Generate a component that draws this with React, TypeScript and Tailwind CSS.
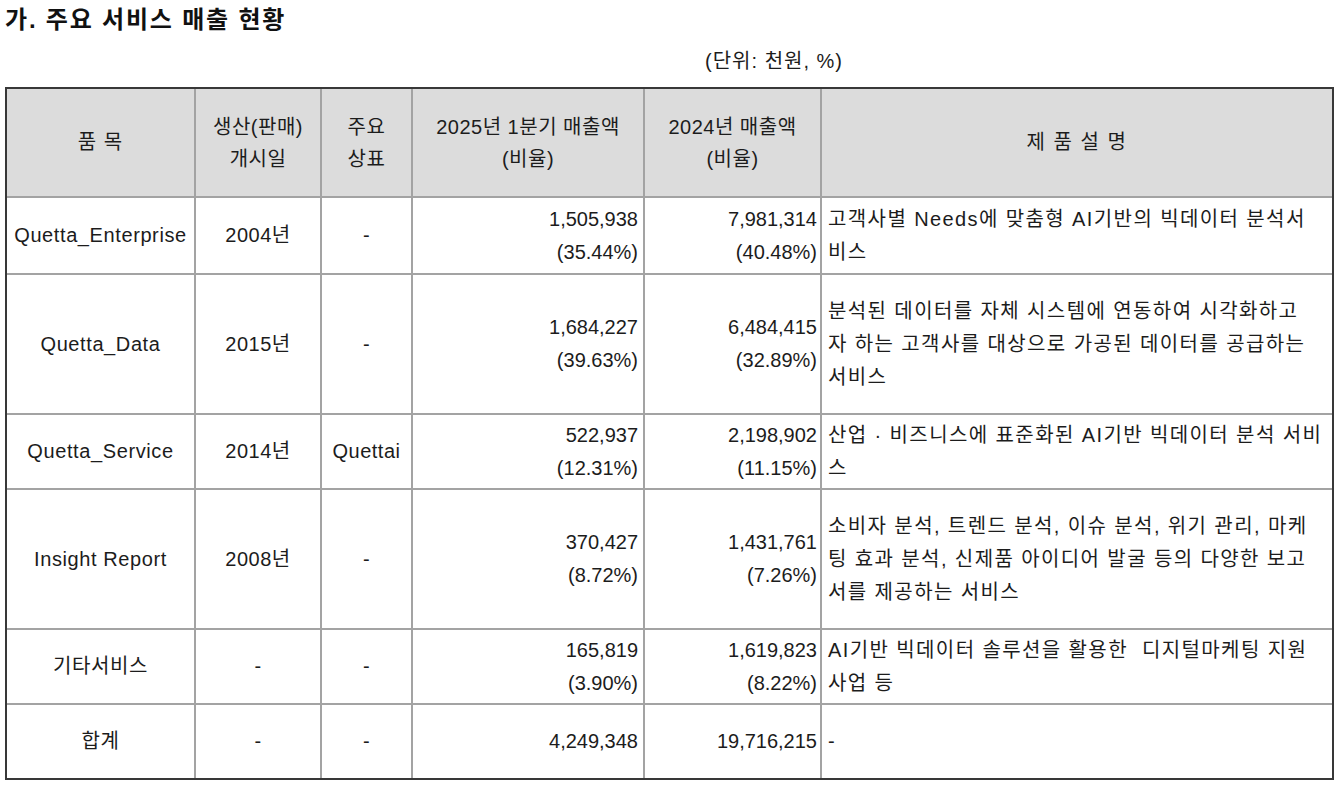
import React from "react";

interface Row {
  name: string;
  start: string;
  brand: string;
  q1: string[];
  y2024: string[];
  desc: string[];
  h: string;
}

const rows: Row[] = [
  {
    name: "Quetta_Enterprise",
    start: "2004년",
    brand: "-",
    q1: ["1,505,938", "(35.44%)"],
    y2024: ["7,981,314", "(40.48%)"],
    desc: ["고객사별 Needs에 맞춤형 AI기반의 빅데이터 분석서", "비스"],
    h: "h-[77px]",
  },
  {
    name: "Quetta_Data",
    start: "2015년",
    brand: "-",
    q1: ["1,684,227", "(39.63%)"],
    y2024: ["6,484,415", "(32.89%)"],
    desc: [
      "분석된 데이터를 자체 시스템에 연동하여 시각화하고",
      "자 하는 고객사를 대상으로 가공된 데이터를 공급하는",
      "서비스",
    ],
    h: "h-[140px]",
  },
  {
    name: "Quetta_Service",
    start: "2014년",
    brand: "Quettai",
    q1: ["522,937", "(12.31%)"],
    y2024: ["2,198,902", "(11.15%)"],
    desc: ["산업 · 비즈니스에 표준화된 AI기반 빅데이터 분석 서비", "스"],
    h: "h-[75px]",
  },
  {
    name: "Insight Report",
    start: "2008년",
    brand: "-",
    q1: ["370,427", "(8.72%)"],
    y2024: ["1,431,761", "(7.26%)"],
    desc: [
      "소비자 분석, 트렌드 분석, 이슈 분석, 위기 관리, 마케",
      "팅 효과 분석, 신제품 아이디어 발굴 등의 다양한 보고",
      "서를 제공하는 서비스",
    ],
    h: "h-[140px]",
  },
  {
    name: "기타서비스",
    start: "-",
    brand: "-",
    q1: ["165,819", "(3.90%)"],
    y2024: ["1,619,823", "(8.22%)"],
    desc: ["AI기반 빅데이터 솔루션을 활용한  디지털마케팅 지원", "사업 등"],
    h: "h-[75px]",
  },
  {
    name: "합계",
    start: "-",
    brand: "-",
    q1: ["4,249,348"],
    y2024: ["19,716,215"],
    desc: ["-"],
    h: "h-[74px]",
  },
];

const cell = "border-2 border-[#a3a3a3] align-middle";

const Lines = ({ lines }: { lines: string[] }) => (
  <>
    {lines.map((l, i) => (
      <div key={i} className="whitespace-pre">
        {l}
      </div>
    ))}
  </>
);

export default function App() {
  return (
    <div
      className="bg-white text-[#1c1c1c] px-[5px] pb-2 min-h-screen"
      style={{ fontFamily: '"Liberation Sans", "Noto Sans CJK KR", sans-serif' }}
    >
      <h2 className="text-[24px] font-bold leading-[40px] tracking-[1.8px] text-[#111]">
        가. 주요 서비스 매출 현황
      </h2>
      <div className="w-[838px] text-right text-[20px] leading-[42px] tracking-[1px]">
        (단위: 천원, %)
      </div>

      <div className="border-2 border-[#383838] w-[1329px] mt-[5px]">
        <table className="w-full table-fixed border-collapse border-hidden text-[20px] leading-[33px] tracking-[0.5px]">
          <colgroup>
            <col className="w-[188px]" />
            <col className="w-[126px]" />
            <col className="w-[91px]" />
            <col className="w-[232px]" />
            <col className="w-[177px]" />
            <col />
          </colgroup>
          <thead>
            <tr className="h-[108px] bg-[#dcdcdc] text-center">
              <th className={`${cell} font-normal tracking-[1px]`}>품 목</th>
              <th className={`${cell} font-normal leading-[32px]`}>
                생산(판매)
                <br />
                개시일
              </th>
              <th className={`${cell} font-normal leading-[32px]`}>
                주요
                <br />
                상표
              </th>
              <th className={`${cell} font-normal leading-[32px]`}>
                2025년 1분기 매출액
                <br />
                (비율)
              </th>
              <th className={`${cell} font-normal leading-[32px]`}>
                2024년 매출액
                <br />
                (비율)
              </th>
              <th className={`${cell} font-normal tracking-[1.5px]`}>제 품 설 명</th>
            </tr>
          </thead>
          <tbody>
            {rows.map((r) => (
              <tr key={r.name} className={r.h}>
                <td className={`${cell} text-center whitespace-nowrap tracking-[0.6px]`}>
                  {r.name}
                </td>
                <td className={`${cell} text-center`}>{r.start}</td>
                <td className={`${cell} text-center`}>{r.brand}</td>
                <td className={`${cell} text-right pr-[5px] tracking-normal`}>
                  <Lines lines={r.q1} />
                </td>
                <td className={`${cell} text-right pr-[3px] tracking-normal`}>
                  <Lines lines={r.y2024} />
                </td>
                <td className={`${cell} text-left pl-[6px] tracking-[1.4px]`}>
                  <Lines lines={r.desc} />
                </td>
              </tr>
            ))}
          </tbody>
        </table>
      </div>
    </div>
  );
}
